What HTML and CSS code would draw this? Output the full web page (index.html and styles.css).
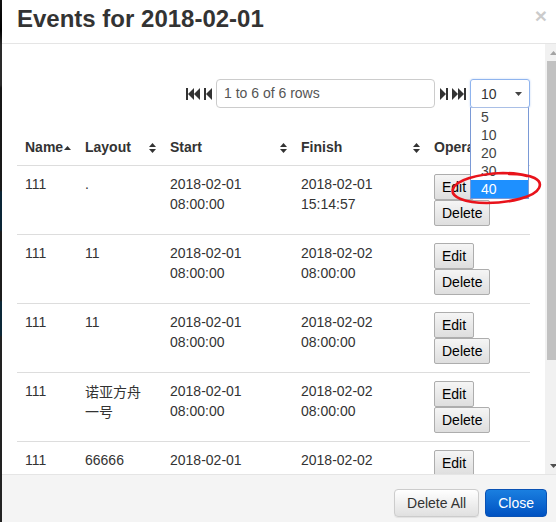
FILE: index.html
```html
<!DOCTYPE html>
<html lang="en">
<head>
<meta charset="utf-8">
<title>Events for 2018-02-01</title>
<link rel="stylesheet" href="styles.css">
</head>
<body>
<div class="modal">
  <div class="modal-header">
    <h3 class="modal-title">Events for 2018-02-01</h3>
    <span class="close">×</span>
  </div>
  <div class="modal-body">
    <div class="body-content">
      <div class="toolbar">
        <svg class="pg-icon" width="26" height="12" viewBox="0 0 26 12">
          <rect x="0" y="0" width="2" height="12"/>
          <polygon points="2,6 8,0 8,12"/>
          <polygon points="8,6 14,0 14,12"/>
          <rect x="18" y="0" width="2" height="12"/>
          <polygon points="20,6 26,0 26,12"/>
        </svg>
        <div class="page-info">1 to 6 of 6 rows</div>
        <svg class="pg-icon right" width="26" height="12" viewBox="0 0 26 12">
          <polygon points="0,0 6,6 0,12"/>
          <rect x="6" y="0" width="2" height="12"/>
          <polygon points="12,0 18,6 12,12"/>
          <polygon points="18,0 24,6 18,12"/>
          <rect x="24" y="0" width="2" height="12"/>
        </svg>
        <div class="page-size">
          <div class="select"><span>10</span><svg class="caret" width="7" height="4" viewBox="0 0 7 4"><polygon points="0,0 7,0 3.5,4"/></svg></div>
          <ul class="dropdown">
            <li>5</li>
            <li>10</li>
            <li>20</li>
            <li>30</li>
            <li class="hover">40</li>
          </ul>
          <svg class="annot" width="100" height="44" viewBox="0 0 100 44">
            <path d="M62 8 C 86 8, 96 14, 92 22 C 88 31, 62 37, 40 37 C 18 37, 3 31, 6 23 C 9 14, 30 8, 56 7 C 66 7, 74 8, 80 10" />
          </svg>
        </div>
      </div>
      <table class="events">
        <colgroup>
          <col class="c-name"><col class="c-layout"><col class="c-start"><col class="c-finish"><col class="c-op">
        </colgroup>
        <thead>
          <tr>
            <th><div class="th-inner">Name<svg class="sort" width="7" height="4" viewBox="0 0 7 4"><polygon points="0,4 3.5,0 7,4"/></svg></div></th>
            <th><div class="th-inner">Layout<svg class="sort" width="7" height="10" viewBox="0 0 7 10"><polygon points="0,4 3.5,0 7,4"/><polygon points="0,6 3.5,10 7,6"/></svg></div></th>
            <th><div class="th-inner">Start<svg class="sort" width="7" height="10" viewBox="0 0 7 10"><polygon points="0,4 3.5,0 7,4"/><polygon points="0,6 3.5,10 7,6"/></svg></div></th>
            <th><div class="th-inner">Finish<svg class="sort" width="7" height="10" viewBox="0 0 7 10"><polygon points="0,4 3.5,0 7,4"/><polygon points="0,6 3.5,10 7,6"/></svg></div></th>
            <th><div class="th-inner">Operation</div></th>
          </tr>
        </thead>
        <tbody>
          <tr>
            <td>111</td><td>.</td><td>2018-02-01 08:00:00</td><td>2018-02-01 15:14:57</td>
            <td><div class="ops"><button class="btn-row">Edit</button><button class="btn-row">Delete</button></div></td>
          </tr>
          <tr>
            <td>111</td><td>11</td><td>2018-02-01 08:00:00</td><td>2018-02-02 08:00:00</td>
            <td><div class="ops"><button class="btn-row">Edit</button><button class="btn-row">Delete</button></div></td>
          </tr>
          <tr>
            <td>111</td><td>11</td><td>2018-02-01 08:00:00</td><td>2018-02-02 08:00:00</td>
            <td><div class="ops"><button class="btn-row">Edit</button><button class="btn-row">Delete</button></div></td>
          </tr>
          <tr>
            <td>111</td><td class="cjk">诺亚方舟一号</td><td>2018-02-01 08:00:00</td><td>2018-02-02 08:00:00</td>
            <td><div class="ops"><button class="btn-row">Edit</button><button class="btn-row">Delete</button></div></td>
          </tr>
          <tr>
            <td>111</td><td>66666</td><td>2018-02-01 08:00:00</td><td>2018-02-02 08:00:00</td>
            <td><div class="ops"><button class="btn-row">Edit</button><button class="btn-row">Delete</button></div></td>
          </tr>
          <tr>
            <td>111</td><td>22</td><td>2018-02-01 08:00:00</td><td>2018-02-02 08:00:00</td>
            <td><div class="ops"><button class="btn-row">Edit</button><button class="btn-row">Delete</button></div></td>
          </tr>
        </tbody>
      </table>
    </div>
    <div class="scrollbar">
      <div class="sb-btn"><svg width="7" height="4" viewBox="0 0 7 4"><polygon class="sb-up" points="0,4 3.5,0 7,4"/></svg></div>
      <div class="sb-track"><div class="sb-thumb"></div></div>
      <div class="sb-btn"><svg width="7" height="4" viewBox="0 0 7 4"><polygon class="sb-down" points="0,0 7,0 3.5,4"/></svg></div>
    </div>
  </div>
  <div class="modal-footer">
    <button class="btn btn-default">Delete All</button>
    <button class="btn btn-primary">Close</button>
  </div>
</div>
</body>
</html>
```

FILE: styles.css
```css
html, body {
  margin: 0;
  padding: 0;
  width: 556px;
  height: 522px;
  overflow: hidden;
}

body {
  background: linear-gradient(to bottom,
    #111 0, #000 30px, #2a2a2a 45px, #2a2a2a 85px, #161616 88px,
    #1a1a1a 190px, #0a2536 192px, #0a2536 230px, #1c1c1c 232px,
    #1c1c1c 300px, #0c2838 302px, #0c2838 335px, #222 337px, #222 522px);
  font-family: "Liberation Sans", Arial, "Noto Sans CJK SC", sans-serif;
  font-size: 14px;
  color: #333;
}

.modal {
  margin-left: 2px;
  width: 560px;
  height: 522px;
  background: #fff;
  display: flex;
  flex-direction: column;
}

.modal-header {
  display: flex;
  align-items: flex-start;
  padding: 6px 15px 11px 15px;
  border-bottom: 1px solid #e5e5e5;
}

.modal-title {
  margin: 0;
  font-size: 24px;
  line-height: 26px;
  font-weight: bold;
  color: #333;
}

.close {
  margin-left: auto;
  margin-top: -1px;
  font-size: 21px;
  line-height: 21px;
  font-weight: bold;
  color: #000;
  opacity: 0.2;
}

.modal-body {
  height: 430px;
  display: flex;
}

.body-content {
  flex: 1;
  min-width: 0;
  padding: 35px 15px 0 15px;
  overflow: hidden;
}

.toolbar {
  display: flex;
  justify-content: flex-end;
  align-items: center;
  height: 29px;
  margin-bottom: 21px;
}

.pg-icon {
  fill: #333;
  margin-right: 4px;
}

.pg-icon.right {
  margin-right: 4px;
}

.page-info {
  box-sizing: border-box;
  width: 219px;
  height: 29px;
  margin-right: 5px;
  border: 1px solid #ccc;
  border-radius: 4px;
  padding: 0 7px;
  line-height: 27px;
  color: #555;
}

.page-size {
  position: relative;
  width: 60px;
  height: 29px;
}

.select {
  box-sizing: border-box;
  width: 60px;
  height: 29px;
  border: 1px solid #8fb4ee;
  border-radius: 3px;
  box-shadow: 0 0 2px rgba(102, 150, 233, 0.45);
  padding: 0 7px 0 10px;
  display: flex;
  align-items: center;
  justify-content: space-between;
  color: #333;
  line-height: 20px;
}

.caret {
  fill: #444;
  margin-top: 1px;
}

.dropdown {
  position: absolute;
  left: 0;
  top: 28px;
  z-index: 5;
  box-sizing: border-box;
  width: 59px;
  margin: 0;
  padding: 0;
  list-style: none;
  background: #fff;
  border: 1px solid #7a99d6;
  border-top-color: #a9bfe6;
}

.dropdown li {
  height: 18px;
  line-height: 18px;
  padding-left: 10px;
  color: #444;
}

.dropdown li.hover {
  background: #1e90ff;
  color: #fff;
}

.annot {
  position: absolute;
  left: -23px;
  top: 87px;
  z-index: 6;
  fill: none;
  stroke: #e8131b;
  stroke-width: 2.6;
  stroke-linecap: round;
  overflow: visible;
}

.events {
  width: 513px;
  table-layout: fixed;
  border-collapse: collapse;
}

.c-name { width: 60px; }
.c-layout { width: 85px; }
.c-start { width: 131px; }
.c-finish { width: 133px; }
.c-op { width: 104px; }

.events th {
  padding: 8px 6px 8px 8px;
  text-align: left;
  font-weight: bold;
  line-height: 20px;
  border-bottom: 1px solid #ddd;
  white-space: nowrap;
  overflow: hidden;
}

.th-inner {
  display: flex;
  justify-content: space-between;
  align-items: center;
}

.sort {
  fill: #333;
  flex: none;
  margin-top: 1px;
}

.events td {
  padding: 8px;
  vertical-align: top;
  line-height: 20px;
  border-top: 1px solid #ddd;
  color: #333;
}

.cjk {
  font-family: "Noto Sans CJK SC", sans-serif;
  font-size: 14px;
}

.ops {
  display: flex;
  flex-direction: column;
  align-items: flex-start;
}

.btn-row {
  box-sizing: border-box;
  height: 26px;
  margin: 0;
  padding: 0 7px;
  font-family: "Liberation Sans", Arial, sans-serif;
  font-size: 14px;
  line-height: 24px;
  color: #000;
  background: linear-gradient(to bottom, #f5f5f5, #dedede);
  border: 1px solid #adadad;
  border-radius: 2px;
}

.scrollbar {
  width: 17px;
  flex: none;
  background: #f1f1f1;
  display: flex;
  flex-direction: column;
}

.sb-btn {
  height: 17px;
  display: flex;
  align-items: center;
  justify-content: center;
}

.sb-up { fill: #a3a3a3; }
.sb-down { fill: #505050; }

.sb-track {
  flex: 1;
  display: flex;
  flex-direction: column;
}

.sb-thumb {
  height: 299px;
  margin: 0 2px;
  background: #c1c1c1;
}

.modal-footer {
  flex: 1;
  display: flex;
  justify-content: flex-end;
  align-items: flex-start;
  gap: 6px;
  padding: 14px 15px 0 15px;
  border-top: 1px solid #e5e5e5;
  background: #f4f4f4;
}

.btn {
  box-sizing: border-box;
  height: 28px;
  margin: 0;
  padding: 0 12px;
  font-family: "Liberation Sans", Arial, sans-serif;
  font-size: 14px;
  line-height: 26px;
  white-space: nowrap;
  border-radius: 4px;
  border: 1px solid #ccc;
}

.btn-default {
  color: #333;
  background: linear-gradient(to bottom, #ffffff, #e0e0e0);
  box-shadow: 0 1px 1px rgba(0, 0, 0, 0.075);
}

.btn-primary {
  color: #fff;
  background: linear-gradient(to bottom, #1a7fe0, #0052c2);
  border-color: #0a52b4;
}
```
